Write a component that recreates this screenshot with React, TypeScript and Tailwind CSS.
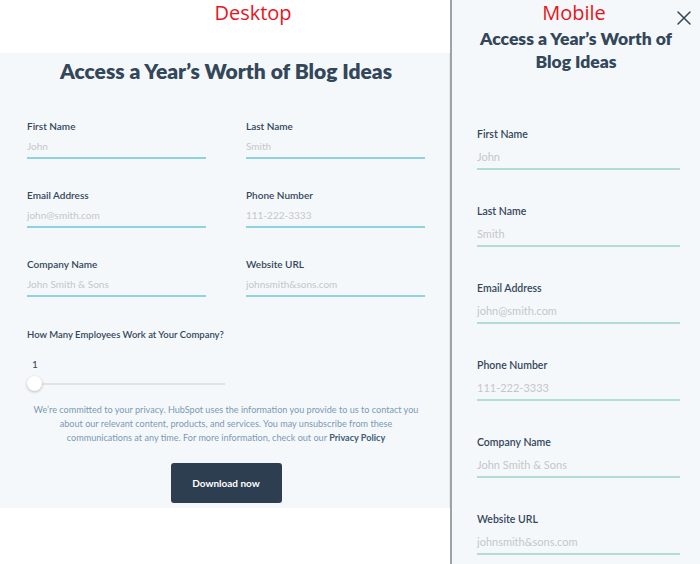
import { X } from "lucide-react";

const desktopFields = [
  ["First Name", "John", "Last Name", "Smith"],
  ["Email Address", "john@smith.com", "Phone Number", "111-222-3333"],
  ["Company Name", "John Smith & Sons", "Website URL", "johnsmith&sons.com"],
];

const mobileFields = [
  ["First Name", "John"],
  ["Last Name", "Smith"],
  ["Email Address", "john@smith.com"],
  ["Phone Number", "111-222-3333"],
  ["Company Name", "John Smith & Sons"],
  ["Website URL", "johnsmith&sons.com"],
];

function DesktopField({ label, placeholder }: { label: string; placeholder: string }) {
  return (
    <div>
      <p className="text-[10px] font-semibold leading-[12px] text-[#33475b]">{label}</p>
      <div className="mt-[4px] h-[23px] border-b-2 border-[#8ed3de] text-[10px] leading-[20px] text-[#c3c7cc]">
        {placeholder}
      </div>
    </div>
  );
}

function MobileField({ label, placeholder }: { label: string; placeholder: string }) {
  return (
    <div>
      <p className="text-[10.5px] font-semibold leading-[12px] text-[#33475b]">{label}</p>
      <div className="mt-[6px] h-[24px] border-b-2 border-[#b3dcd8] text-[11px] leading-[22px] text-[#c3c7cc]">
        {placeholder}
      </div>
    </div>
  );
}

export default function App() {
  return (
    <div className="flex h-[564px] w-[700px] overflow-hidden bg-white font-['Lato',sans-serif]">
      <section className="flex w-[450px] shrink-0 flex-col">
        <header className="h-[53px] bg-white pl-[56px] text-center font-['Open_Sans',sans-serif] text-[20px] leading-[26px] text-[#e8141b]">
          Desktop
        </header>
        <div className="h-[455px] border-r border-[#e6eaee] bg-[#f5f8fa] pt-[6px] pr-[24px] pl-[27px]">
          <h1 className="-mx-[10px] text-center text-[21px] font-extrabold leading-[24px] text-[#33475b]">
            Access a Year’s Worth of Blog Ideas
          </h1>
          <div className="mt-[37px] flex flex-col gap-[30px]">
            {desktopFields.map(([l1, p1, l2, p2]) => (
              <div key={l1} className="grid grid-cols-2 gap-x-[40px]">
                <DesktopField label={l1} placeholder={p1} />
                <DesktopField label={l2} placeholder={p2} />
              </div>
            ))}
          </div>
          <p className="mt-[32px] text-[9.5px] font-semibold leading-[12px] text-[#33475b]">
            How Many Employees Work at Your Company?
          </p>
          <p className="mt-[17px] pl-[5px] text-[10px] leading-[12px] text-[#33475b]">1</p>
          <div className="relative mt-[13px] ml-[6px] h-[2px] w-[192px] bg-[#dfe3e8]">
            <span className="absolute top-[-7px] left-[-6px] h-[15px] w-[15px] rounded-full bg-white shadow-[0_1px_3px_rgba(0,0,0,0.25)]" />
          </div>
          <p className="-mx-[6px] mt-[18px] text-center text-[9.1px] leading-[14px] text-[#7c98b6]">
            We’re committed to your privacy. HubSpot uses the information you provide to us to contact you
            <br />
            about our relevant content, products, and services. You may unsubscribe from these
            <br />
            communications at any time. For more information, check out our{" "}
            <span className="font-bold text-[#425b76]">Privacy Policy</span>
          </p>
          <div className="mt-[18px] flex justify-center">
            <button className="h-[40px] w-[111px] rounded-[3px] bg-[#2d3e50] text-[10px] font-bold text-white">
              Download now
            </button>
          </div>
        </div>
      </section>
      <section className="relative flex-1 border-l-2 border-[#9ea3a8] bg-[#f5f8fa]">
        <X className="absolute top-[6px] right-[4px] h-[24px] w-[24px] stroke-[1.5] text-[#33475b]" />
        <p className="pt-[1px] pr-[4px] text-center font-['Open_Sans',sans-serif] text-[20px] leading-[24px] text-[#e8141b]">
          Mobile
        </p>
        <h1 className="mt-[2px] px-[18px] text-center text-[17.5px] font-extrabold leading-[23px] text-[#33475b]">
          Access a Year’s Worth of Blog Ideas
        </h1>
        <div className="mt-[55px] flex flex-col gap-[35px] pr-[20px] pl-[25px]">
          {mobileFields.map(([l, p]) => (
            <MobileField key={l} label={l} placeholder={p} />
          ))}
        </div>
      </section>
    </div>
  );
}
